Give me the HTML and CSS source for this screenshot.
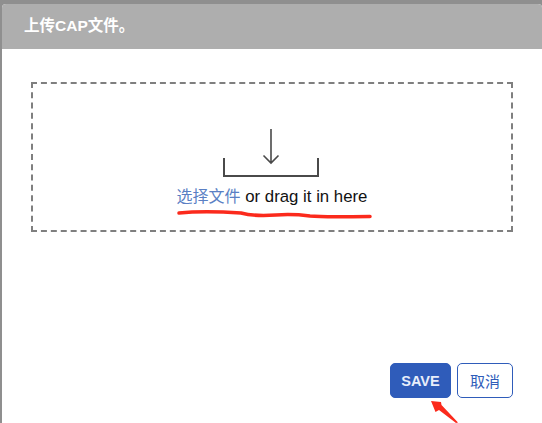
FILE: index.html
```html
<!DOCTYPE html>
<html>
<head>
    <link rel="stylesheet" href="styles.css">
</head>
<body>
    <div class="modal">
        <div class="modal-header">上传CAP文件。</div>
        <div class="modal-body">
            <div class="dropzone">
                <svg class="drop-icon" width="98" height="50" viewBox="0 0 98 50">
                    <path d="M49 0V34M41.500 26.500L49 34L56.500 26.500" fill="none" stroke="#4a4a4a" stroke-width="1.600"/>
                    <path d="M2 29V47H96V29" fill="none" stroke="#4a4a4a" stroke-width="2"/>
                </svg>
                <div class="drop-text"><a class="file-link">选择文件</a> or drag it in here</div>
            </div>
        </div>
        <div class="modal-footer">
            <button class="btn btn-save">SAVE</button>
            <button class="btn btn-cancel">取消</button>
        </div>
    </div>

    <!-- red marks drawn on top of the screenshot -->
    <svg class="marks" width="542" height="423" viewBox="0 0 542 423">
        <path d="M179 213C195 211.500 225 212 241 213C252 216 262 216 276 215C290 214 302 215 310 216C325 217.500 350 216.500 370 216.500" fill="none" stroke="#fb2a1c" stroke-width="3.500" stroke-linecap="round"/>
        <path d="M431 401L441 402L441.500 405L458 422.500L456 423L439 410L435.500 412Z" fill="#fb2a1c"/>
    </svg>
</body>
</html>
```

FILE: styles.css
```css
html, body {
    height: 100%;
}
body {
    margin: 0;
    height: 423px;
    overflow: hidden;
    position: relative;
    box-sizing: border-box;
    padding: 4px 0 0 2px;
    background-color: #8f8f8f;
    font-family: "Liberation Sans", "Noto Sans CJK SC", sans-serif;
}
.modal {
    height: 100%;
    display: flex;
    flex-direction: column;
    background-color: #fff;
    border-radius: 4px 4px 0 0;
}
.modal-header {
    height: 45px;
    flex: none;
    padding-left: 22px;
    line-height: 44px;
    font-size: 15.500px;
    font-weight: bold;
    color: #fff;
    background-color: #aeaeae;
    border-radius: 4px 4px 0 0;
}
.modal-body {
    flex: 1;
    padding: 33px 29px 0 29px;
}
.dropzone {
    box-sizing: border-box;
    height: 150px;
    padding-top: 45px;
    border: 2px dashed #7f7f7f;
    display: flex;
    flex-direction: column;
    align-items: center;
}
.drop-icon {
    display: block;
    flex: none;
    margin-right: 3px;
}
.drop-text {
    margin-top: 8px;
    font-size: 16.800px;
    line-height: 20px;
    color: #111;
}
.file-link {
    font-size: 16px;
    color: #5a7fc4;
}
.modal-footer {
    display: flex;
    justify-content: flex-end;
    gap: 6px;
    padding: 0 29px 25px 0;
}
.btn {
    box-sizing: border-box;
    width: 56px;
    height: 35px;
    padding: 0;
    border-radius: 5px;
    border: 1px solid #2f5cba;
    font-family: inherit;
    font-size: 15px;
}
.btn-save {
    width: 61px;
    font-size: 14.500px;
    font-weight: bold;
    color: #e8eefa;
    background-color: #2f5cba;
}
.btn-cancel {
    color: #2f5cba;
    background-color: #fff;
}
.marks {
    position: absolute;
    left: 0;
    top: 0;
    pointer-events: none;
}
```
